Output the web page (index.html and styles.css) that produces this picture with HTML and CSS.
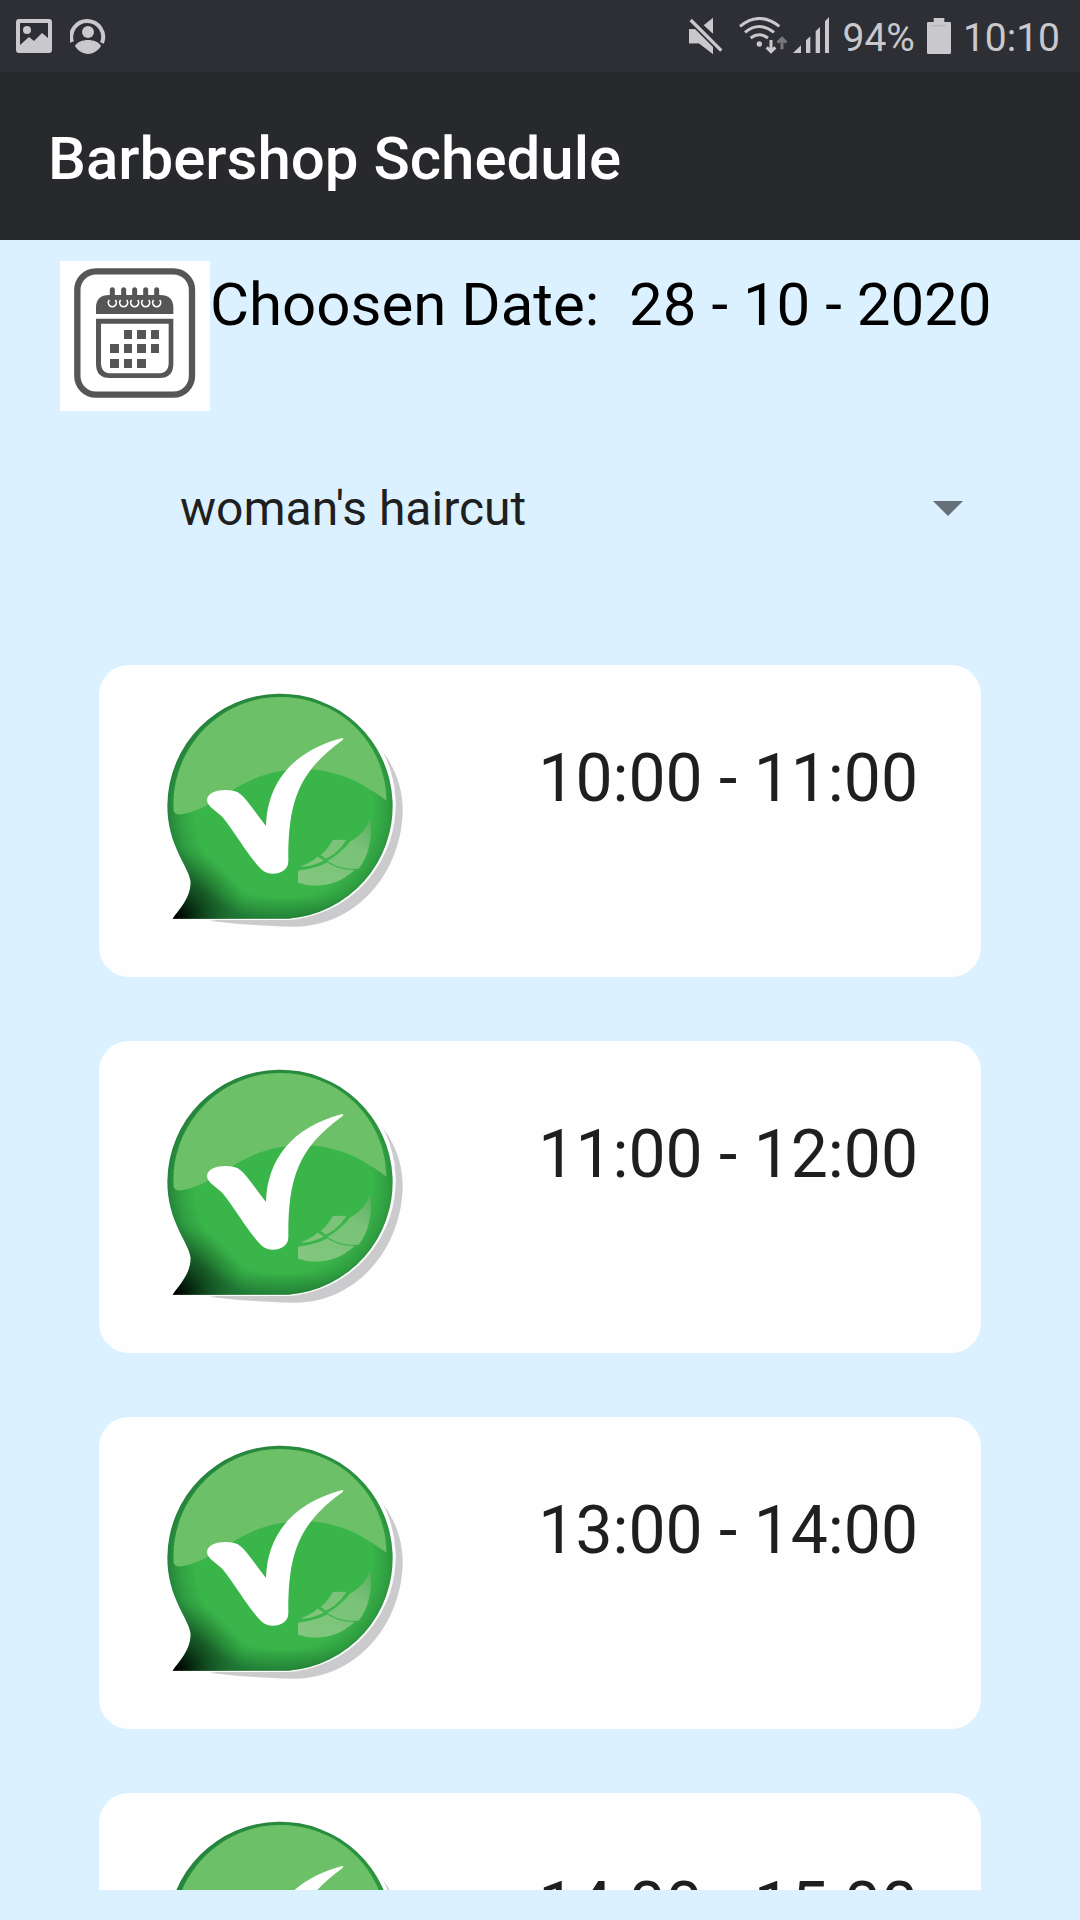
FILE: index.html
```html
<!DOCTYPE html>
<html lang="en">
<head>
<meta charset="utf-8">
<meta name="viewport" content="width=device-width, initial-scale=1">
<title>Barbershop Schedule</title>
<link rel="stylesheet" href="styles.css">
</head>
<body>
<svg class="symbols" aria-hidden="true">
  <defs>
    <radialGradient id="body-fill" gradientUnits="userSpaceOnUse" cx="400" cy="385" r="350">
      <stop offset="0.76" stop-color="#3ab54a"/>
      <stop offset="0.9" stop-color="#2f9e41"/>
      <stop offset="1" stop-color="#23803a"/>
    </radialGradient>
    <radialGradient id="tail-fill" gradientUnits="userSpaceOnUse" cx="80" cy="712" r="210">
      <stop offset="0" stop-color="#000"/>
      <stop offset="0.25" stop-color="#04200b" stop-opacity="0.85"/>
      <stop offset="1" stop-color="#1a6a2b" stop-opacity="0"/>
    </radialGradient>
    <linearGradient id="base-fill" x1="0" y1="0" x2="0" y2="1">
      <stop offset="0.9" stop-color="#1d7430" stop-opacity="0"/>
      <stop offset="1" stop-color="#1d7430" stop-opacity="0.5"/>
    </linearGradient>
    <linearGradient id="shine-fill" x1="0" y1="1" x2="1" y2="0">
      <stop offset="0" stop-color="#84c780"/>
      <stop offset="0.7" stop-color="#79c277"/>
      <stop offset="1" stop-color="#5bb062"/>
    </linearGradient>
  </defs>
  <symbol id="available" viewBox="0 0 810 780">
    <path fill="#cbcacc" d="M682 196C735 255 760 325 758 400C750 590 610 742 430 740C340 738 250 731 178 722L400 700L660 560Z"/>
    <path fill="#fff" stroke="#fff" stroke-width="18" d="M72 711C92 684 122 655 122 605C118 560 52 500 52 376A338 338 0 1 1 415 711Z"/>
    <path fill="url(#body-fill)" d="M68 716C88 687 122 655 122 605C118 560 52 500 52 376A338 338 0 1 1 415 716Z"/>
    <path fill="url(#base-fill)" d="M68 716C88 687 122 655 122 605C118 560 52 500 52 376A338 338 0 1 1 415 716Z"/>
    <path fill="url(#tail-fill)" d="M68 716C88 687 122 655 122 605C118 560 52 500 52 376A338 338 0 1 1 415 716Z"/>
    <path fill="#6cc067" d="M71 392C60 210 205 51 390 51C570 51 708 190 709 362C620 295 545 268 460 268C270 268 220 380 95 403C82 404 72 400 71 392Z"/>
    <path fill="#fff" d="M171 360C172 327 238 325 262 336C288 350 320 405 348 438C352 310 425 215 576 174C582 174 580 179 574 183C440 280 414 375 415 545C414 583 355 592 333 567C298 533 258 462 218 412C203 395 171 380 171 360Z"/>
    <path fill="url(#shine-fill)" d="M660 416C668 480 655 530 626 566C590 568 560 562 532 542C560 530 583 505 601 484C628 468 648 450 660 416ZM548 480L589 479C574 505 555 522 528 536L512 525C528 512 540 497 548 480ZM502 530L522 541C500 553 478 560 450 560C470 552 488 544 502 530ZM444 572C475 568 505 562 532 547C560 566 585 570 613 570C570 612 510 628 444 608Z"/>
  </symbol>
</svg>

<header class="status">
  <div class="status-group status-left">
    <svg class="icon-note" viewBox="0 0 36 36" aria-hidden="true">
      <path fill="#c8c8cd" fill-rule="evenodd" d="M3 1H33Q36 1 36 4V32Q36 35 33 35H3Q0 35 0 32V4Q0 1 3 1ZM4 5V27L13 19L18 23L26 15L32 20V5Z"/>
      <circle cx="11" cy="12" r="4" fill="#c8c8cd"/>
    </svg>
    <svg class="icon-note" viewBox="0 0 36 36" aria-hidden="true">
      <path d="M2 24A16 16 0 1 1 32 25" fill="none" stroke="#c8c8cd" stroke-width="4"/>
      <circle cx="18" cy="14" r="6" fill="#c8c8cd"/>
      <path d="M5 28C9 20 27 20 31 28C24 39 11 38 5 28Z" fill="#c8c8cd"/>
    </svg>
  </div>
  <div class="status-group status-right">
    <svg class="icon-mute" viewBox="54 51 102 114" aria-hidden="true">
      <path fill="#c8c8cd" d="M54 88H72L126 142V162L84 130H54ZM98 76L126 53V101Z"/>
      <path d="M54 88H72L126 142V162L84 130H54Z" fill="#c8c8cd"/>
      <path d="M64 55L156 147" stroke="#2e2f34" stroke-width="8"/>
      <path d="M59 60L151 152" stroke="#c8c8cd" stroke-width="10"/>
    </svg>
    <svg class="icon-wifi" viewBox="201 51 150 114" aria-hidden="true">
      <g fill="none" stroke="#c8c8cd" stroke-width="9">
        <path d="M207 79Q265 32 325 79"/>
        <path d="M222 97Q265 62 309 97"/>
        <path d="M239 114Q265 95 291 114"/>
        <path d="M300 120V153M287 142L300 155L313 142"/>
      </g>
      <circle cx="265" cy="132" r="8" fill="#c8c8cd"/>
      <path d="M333 148V116M320 128L333 115L346 128" fill="none" stroke="#77777c" stroke-width="9"/>
    </svg>
    <svg class="icon-signal" viewBox="366 51 111 114" aria-hidden="true">
      <path fill="#c8c8cd" d="M366 159L390 136V159ZM405 121L418 109V159H405ZM434 94L447 81V159H434ZM462 64L474 51V159H462Z"/>
    </svg>
    <span class="status-text battery-level">94%</span>
    <svg class="icon-battery" viewBox="768 51 72 114" aria-hidden="true">
      <path fill="#c8c8cd" d="M788 54H820V66H836Q840 66 840 70V158Q840 162 836 162H772Q768 162 768 158V70Q768 66 772 66H788Z"/>
      <path d="M782 77H826" stroke="#a4a4a9" stroke-width="2"/>
    </svg>
    <span class="status-text">10:10</span>
  </div>
</header>

<div class="app-bar"><h1>Barbershop Schedule</h1></div>

<main class="screen">
  <section class="date-row">
    <button class="calendar-button" type="button" aria-label="Choose date">
      <svg viewBox="60 63 450 450" aria-hidden="true">
        <path fill="#fff" d="M60 63H510V513H60Z"/>
        <rect x="112" y="94" width="344" height="370" rx="56" fill="none" stroke="#565656" stroke-width="19"/>
        <path fill="#565656" d="M168 222V203Q168 165 208 165H360Q400 165 400 203V222Z"/>
        <path fill="#565656" fill-rule="evenodd" d="M168 236H400V372Q400 414 358 414H210Q168 414 168 372ZM183 251V368Q183 400 214 400H354Q386 400 386 368V251Z"/>
        <path fill="none" stroke="#565656" stroke-width="15" stroke-linecap="round" d="M217 149V184M251 149V184M284 149V184M317 149V184M350 149V184"/>
        <path fill="none" stroke="#fff" stroke-width="5" d="M208 180A12 12 0 1 0 226 180M242 180A12 12 0 1 0 260 180M275 180A12 12 0 1 0 293 180M308 180A12 12 0 1 0 326 180M341 180A12 12 0 1 0 359 180"/>
        <path fill="#565656" d="M252 270h24v27h-24zM291 270h27v27h-27zM333 270h24v27h-24zM210 312h27v27h-27zM252 312h24v27h-24zM291 312h27v27h-27zM333 312h24v27h-24zM210 357h27v27h-27zM252 357h24v27h-24zM291 357h27v27h-27z"/>
      </svg>
    </button>
    <p class="date-text">Choosen Date:  28 - 10 - 2020</p>
  </section>

  <div class="service">
    <select class="service-select" aria-label="Service">
      <option>woman's haircut</option>
    </select>
    <svg class="service-arrow" viewBox="0 0 30 15" aria-hidden="true"><path fill="#667079" d="M0 0H30L15 15Z"/></svg>
  </div>

  <ul class="slots">
    <li><button class="slot" type="button"><svg class="slot-icon" aria-hidden="true"><use href="#available"/></svg><span class="slot-time">10:00 - 11:00</span></button></li>
    <li><button class="slot" type="button"><svg class="slot-icon" aria-hidden="true"><use href="#available"/></svg><span class="slot-time">11:00 - 12:00</span></button></li>
    <li><button class="slot" type="button"><svg class="slot-icon" aria-hidden="true"><use href="#available"/></svg><span class="slot-time">13:00 - 14:00</span></button></li>
    <li><button class="slot" type="button"><svg class="slot-icon" aria-hidden="true"><use href="#available"/></svg><span class="slot-time">14:00 - 15:00</span></button></li>
  </ul>
</main>
</body>
</html>
```
FILE: styles.css
```css
* {
  box-sizing: border-box;
}

body {
  margin: 0;
  height: 100vh;
  display: flex;
  flex-direction: column;
  background: #dbf1ff;
  color: #1f1f1f;
  font-family: Roboto, "Liberation Sans", sans-serif;
}

button,
select {
  margin: 0;
  padding: 0;
  border: 0;
  background: none;
  color: inherit;
  font: inherit;
}

svg {
  display: block;
  flex: none;
}

.symbols {
  position: absolute;
  width: 0;
  height: 0;
}

/* Status bar */
.status {
  flex: none;
  display: flex;
  justify-content: space-between;
  height: 72px;
  padding: 0 20px 0 16px;
  background: #2e2f34;
  color: #c8c8cd;
}

.status-group {
  display: flex;
  align-items: center;
}

.status-left {
  gap: 18px;
}

.icon-note {
  width: 36px;
  height: 36px;
}

.icon-mute {
  width: 34px;
  height: 38px;
  margin-right: 15px;
}

.icon-wifi {
  width: 50px;
  height: 38px;
  margin-right: 5px;
}

.icon-signal {
  width: 37px;
  height: 38px;
}

.icon-battery {
  width: 24px;
  height: 38px;
  margin-right: 12px;
}

.status-text {
  padding-top: 4px;
  font-size: 39px;
  line-height: 44px;
}

.battery-level {
  margin: 0 12px;
}

/* Title bar */
.app-bar {
  flex: none;
  display: flex;
  align-items: center;
  height: 168px;
  padding: 6px 48px 0;
  background: #28292d;
  color: #fff;
}

.app-bar h1 {
  margin: 0;
  font-size: 60px;
  font-weight: 500;
  line-height: 72px;
}

/* Content */
.screen {
  flex: 1;
  min-height: 0;
  display: flex;
  flex-direction: column;
  padding: 21px 0 30px;
}

.date-row {
  flex: none;
  display: flex;
  padding: 0 60px;
}

.calendar-button {
  flex: none;
  width: 150px;
  height: 150px;
}

.date-text {
  margin: 0;
  padding-top: 8px;
  color: #000;
  font-size: 60px;
  line-height: 72px;
  white-space: pre;
}

.service {
  flex: none;
  display: grid;
  align-items: center;
  margin: 61px 96px 121px 156px;
}

.service-select,
.service-arrow {
  grid-area: 1 / 1;
}

.service-select {
  appearance: none;
  width: 100%;
  height: 72px;
  padding: 0 72px 0 24px;
  font-size: 48px;
}

.service-arrow {
  justify-self: end;
  width: 30px;
  height: 15px;
  margin-right: 21px;
  pointer-events: none;
}

.slots {
  flex: 1;
  min-height: 0;
  display: flex;
  flex-direction: column;
  gap: 64px;
  margin: 0;
  padding: 0 99px;
  overflow-y: auto;
  scrollbar-width: none;
  list-style: none;
}

.slot {
  display: flex;
  justify-content: space-between;
  align-items: flex-start;
  width: 100%;
  height: 312px;
  padding: 15px 63px 0 51px;
  border-radius: 30px;
  background: #fefefe;
}

.slot-icon {
  width: 270px;
  height: 260px;
}

.slot-time {
  padding-top: 60px;
  font-size: 66px;
  line-height: 78px;
}
```
